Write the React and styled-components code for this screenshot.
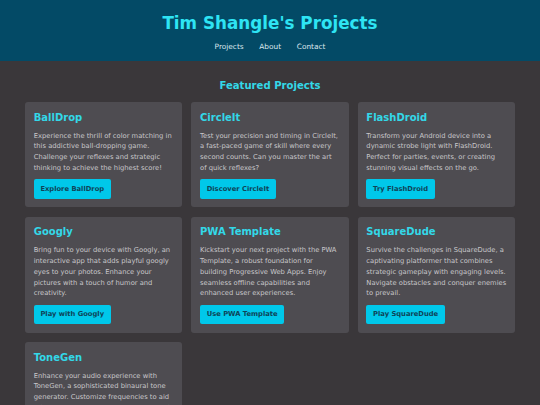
import React from 'react';
import styled, { createGlobalStyle } from 'styled-components';

const projects = [
  {
    name: 'BallDrop',
    text: 'Experience the thrill of color matching in this addictive ball-dropping game. Challenge your reflexes and strategic thinking to achieve the highest score!',
    cta: 'Explore BallDrop'
  },
  {
    name: 'CircleIt',
    text: 'Test your precision and timing in CircleIt, a fast-paced game of skill where every second counts. Can you master the art of quick reflexes?',
    cta: 'Discover CircleIt'
  },
  {
    name: 'FlashDroid',
    text: 'Transform your Android device into a dynamic strobe light with FlashDroid. Perfect for parties, events, or creating stunning visual effects on the go.',
    cta: 'Try FlashDroid'
  },
  {
    name: 'Googly',
    text: 'Bring fun to your device with Googly, an interactive app that adds playful googly eyes to your photos. Enhance your pictures with a touch of humor and creativity.',
    cta: 'Play with Googly'
  },
  {
    name: 'PWA Template',
    text: 'Kickstart your next project with the PWA Template, a robust foundation for building Progressive Web Apps. Enjoy seamless offline capabilities and enhanced user experiences.',
    cta: 'Use PWA Template'
  },
  {
    name: 'SquareDude',
    text: 'Survive the challenges in SquareDude, a captivating platformer that combines strategic gameplay with engaging levels. Navigate obstacles and conquer enemies to prevail.',
    cta: 'Play SquareDude'
  },
  {
    name: 'ToneGen',
    text: 'Enhance your audio experience with ToneGen, a sophisticated binaural tone generator. Customize frequencies to aid relaxation, focus, meditation or a restful sleep.',
    cta: 'Try ToneGen'
  }
];

function App() {
  return (
    <>
      <GlobalStyle />
      <Header>
        <SiteTitle>Tim Shangle's Projects</SiteTitle>
        <Nav>
          <NavLink href="#projects">Projects</NavLink>
          <NavLink href="#about">About</NavLink>
          <NavLink href="#contact">Contact</NavLink>
        </Nav>
      </Header>
      <Main id="projects">
        <SectionTitle>Featured Projects</SectionTitle>
        <Grid>
          {projects.map((p) => (
            <Card key={p.name}>
              <CardTitle>{p.name}</CardTitle>
              <CardText>{p.text}</CardText>
              <CardButton href="#">{p.cta}</CardButton>
            </Card>
          ))}
        </Grid>
      </Main>
    </>
  );
}

const GlobalStyle = createGlobalStyle`
  html, body {
    margin: 0;
    padding: 0;
    background-color: #3a373a;
    font-family: "DejaVu Sans", Verdana, sans-serif;
  }
`;

const Header = styled.header`
  background-color: #034a66;
  padding: 12.7px 0 9.6px;
  text-align: center;
`;

const SiteTitle = styled.h1`
  margin: 0 0 9.5px;
  font-size: 16.8px;
  font-weight: bold;
  color: #2ee4f4;
`;

const Nav = styled.nav`
  display: flex;
  justify-content: center;
  gap: 15.7px;
`;

const NavLink = styled.a`
  font-size: 7.36px;
  color: #dde8ee;
  text-decoration: none;
`;

const Main = styled.main`
  padding: 19.2px 25px 20px;
`;

const SectionTitle = styled.h2`
  margin: 0 0 11.2px;
  text-align: center;
  font-size: 10.1px;
  color: #33d8e8;
`;

const Grid = styled.div`
  display: grid;
  grid-template-columns: repeat(3, 1fr);
  column-gap: 9px;
  row-gap: 9.5px;
`;

const Card = styled.div`
  display: flex;
  flex-direction: column;
  align-items: flex-start;
  padding: 9.5px 8.7px 8.5px;
  background-color: #4e4c51;
  border-radius: 3px;
`;

const CardTitle = styled.h3`
  margin: 0 0 8px;
  font-size: 10px;
  color: #33d8e8;
`;

const CardText = styled.p`
  margin: 0 0 5.5px;
  font-size: 6.75px;
  line-height: 1.6;
  color: #c8c7ca;
`;

const CardButton = styled.a`
  margin-top: auto;
  padding: 5.7px 6.7px;
  border-radius: 2px;
  background-color: #00c8ea;
  color: #0f4458;
  font-size: 6.75px;
  font-weight: bold;
  text-decoration: none;
`;

export default App;
